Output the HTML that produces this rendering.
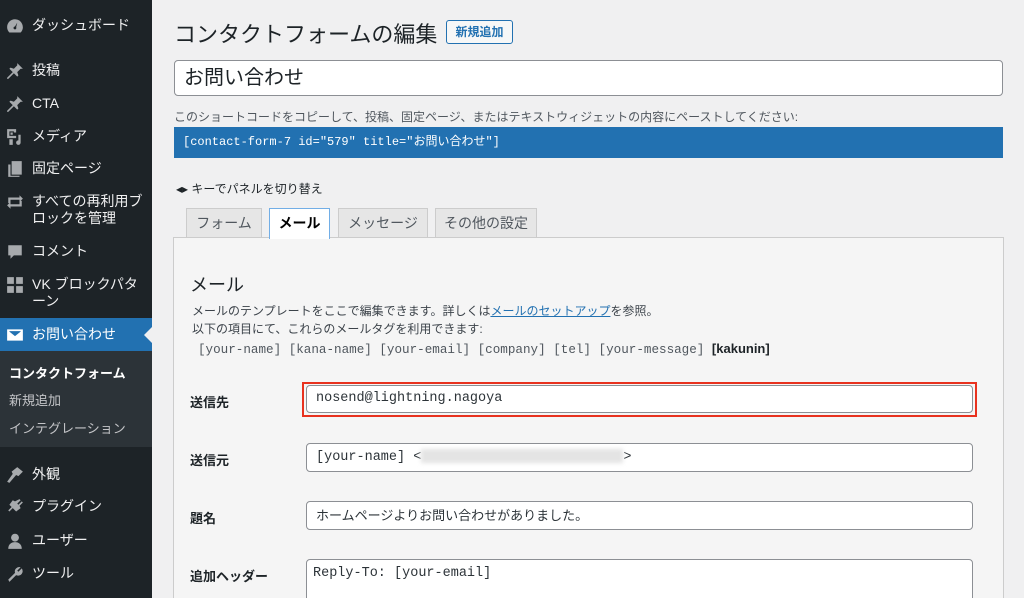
<!DOCTYPE html>
<html><head><meta charset="utf-8"><style>
*{box-sizing:border-box;margin:0;padding:0}
html{width:1024px;height:598px;overflow:hidden}
body{width:1024px;height:598px;overflow:hidden;background:#f0f0f1;font-family:"Liberation Sans","Noto Sans CJK JP",sans-serif;color:#1d2327;position:relative}
.sb{position:absolute;left:0;top:0;width:152px;height:598px;background:#1d2327}
.it{position:absolute;left:0;width:152px;color:#f0f0f1;font-size:14px;line-height:17px}
.it .ic{position:absolute;left:6px;width:18px;height:18px;fill:#a7aaad}
.it span{position:absolute;left:32px;white-space:nowrap}
.sub{position:absolute;left:0;top:351px;width:152px;height:96px;background:#2c3338}
.sub div{position:absolute;left:9px;font-size:13px;color:#c3c4c7;white-space:nowrap}
.mono{font-family:"Liberation Mono","Noto Sans CJK JP",monospace}
.abs{position:absolute}
.tab{position:absolute;top:208px;height:30px;background:#e6e6e6;border:1px solid #ccc;border-bottom:none;font-size:14px;color:#50575e;text-align:center;line-height:28px}
.lbl{position:absolute;left:190px;font-size:13px;font-weight:bold;color:#1d2327}
.inp{position:absolute;left:306px;width:667px;background:#fff;border:1px solid #8c8f94;border-radius:4px;font-size:14px;padding-left:9px;color:#2c3338}
</style></head><body>
<div class="sb">
 <div class="it" style="top:17px"><svg class="ic" viewBox="0 0 16 16"><path d="M8 2a7 7 0 0 0-7 7c0 2 .8 3.6 2 4.8h10A7 7 0 0 0 8 2zm0 9a1.3 1.3 0 1 1 0-2.6L10 5l-1 4a1.3 1.3 0 0 1-1 2z"/></svg><span>ダッシュボード</span></div>
 <div class="it" style="top:62px"><svg class="ic" viewBox="0 0 16 16"><path d="M10 1l5 5-2 0-3 3 1 3-1 1-3-3-5 5-1 0 0-1 5-5-3-3 1-1 3 1 3-3z"/></svg><span>投稿</span></div>
 <div class="it" style="top:95px"><svg class="ic" viewBox="0 0 16 16"><path d="M10 1l5 5-2 0-3 3 1 3-1 1-3-3-5 5-1 0 0-1 5-5-3-3 1-1 3 1 3-3z"/></svg><span>CTA</span></div>
 <div class="it" style="top:128px"><svg class="ic" viewBox="0 0 16 16"><path d="M1 1h8v3H7V3H3v4h6v2H1zM4 4h2v2H4zM3 10h3v5H3zM11 6h2v7a2 2 0 1 1-2-2z"/></svg><span>メディア</span></div>
 <div class="it" style="top:160px"><svg class="ic" viewBox="0 0 16 16"><path d="M5 1h9v12H5zM2 4h2v10h8v1H2z"/></svg><span>固定ページ</span></div>
 <div class="it" style="top:193px"><svg class="ic" viewBox="0 0 16 16"><path d="M2 4h10V2l3 3-3 3V6H4v3H2zM14 12H4v2l-3-3 3-3v2h8V7h2z"/></svg><span>すべての再利用ブ<br>ロックを管理</span></div>
 <div class="it" style="top:243px"><svg class="ic" viewBox="0 0 16 16"><path d="M2 2h12v9H7l-3 3v-3H2z"/></svg><span>コメント</span></div>
 <div class="it" style="top:276px"><svg class="ic" viewBox="0 0 16 16"><path d="M1 1h6v6H1zM9 1h6v6H9zM1 9h6v6H1zM9 9h6v6H9z"/></svg><span>VK ブロックパタ<br>ーン</span></div>
 <div class="abs" style="top:318px;left:0;width:152px;height:33px;background:#2271b1"></div>
 <div class="abs" style="top:327px;left:144px;width:0;height:0;border-top:8px solid transparent;border-bottom:8px solid transparent;border-right:8px solid #f0f0f1"></div>
 <div class="it" style="top:326px;color:#fff"><svg class="ic" viewBox="0 0 16 16" style="fill:#fff"><path d="M1 3h14v10H1zM3 5l5 4 5-4v-0.5H3z" fill-rule="evenodd"/></svg><span>お問い合わせ</span></div>
 <div class="sub">
  <div style="top:12px;color:#fff;font-weight:bold">コンタクトフォーム</div>
  <div style="top:39px">新規追加</div>
  <div style="top:67px">インテグレーション</div>
 </div>
 <div class="it" style="top:466px"><svg class="ic" viewBox="0 0 16 16"><path d="M10 1l5 4-4 4-2-1-6 7-2-1 5-7-1-2z"/></svg><span>外観</span></div>
 <div class="it" style="top:498px"><svg class="ic" viewBox="0 0 16 16"><path d="M12 1l1 1-3 3 1 1 3-3 1 1-3 3 1 2-4 3-3-3-3 3-1-1 3-3-2-2 3-4 2 1z"/></svg><span>プラグイン</span></div>
 <div class="it" style="top:532px"><svg class="ic" viewBox="0 0 16 16"><circle cx="8" cy="5" r="3.5"/><path d="M2 15c0-4 2.5-6 6-6s6 2 6 6z"/></svg><span>ユーザー</span></div>
 <div class="it" style="top:565px"><svg class="ic" viewBox="0 0 16 16"><path d="M14 3l-3 3-1-1 3-3a4 4 0 0 0-5 5L2 13l1 2 6-6a4 4 0 0 0 5-6z"/></svg><span>ツール</span></div>
</div>

<div class="abs" style="left:174px;top:17px;font-size:22px;color:#1d2327;white-space:nowrap">コンタクトフォームの編集</div>
<div class="abs" style="left:446px;top:20px;width:67px;height:24px;border:1px solid #2271b1;border-radius:3px;background:#f6f7f7;color:#2271b1;font-size:12px;font-weight:bold;text-align:center;line-height:22px">新規追加</div>
<div class="abs" style="left:174px;top:60px;width:829px;height:36px;background:#fff;border:1px solid #8c8f94;border-radius:4px;font-size:20px;padding-left:9px;line-height:34px">お問い合わせ</div>
<div class="abs" style="left:174px;top:108px;font-size:12px;color:#50575e;white-space:nowrap">このショートコードをコピーして、投稿、固定ページ、またはテキストウィジェットの内容にペーストしてください:</div>
<div class="abs mono" style="left:174px;top:127px;width:829px;height:31px;background:#2271b1;color:#fff;font-size:12px;padding-left:9px;line-height:31px">[contact-form-7 id="579" title="お問い合わせ"]</div>
<div class="abs" style="left:176px;top:180px;font-size:12px;color:#1d2327;white-space:nowrap">◂▸ キーでパネルを切り替え</div>

<div class="tab" style="left:186px;width:76px">フォーム</div>
<div class="tab" style="left:338px;width:90px">メッセージ</div>
<div class="tab" style="left:435px;width:102px">その他の設定</div>
<div class="abs" style="left:173px;top:237px;width:831px;height:370px;background:#f5f5f5;border:1px solid #ccc"></div>
<div class="tab" style="left:269px;width:61px;background:#fff;border:1px solid #72aee6;border-bottom:none;color:#000;font-weight:bold;height:31px">メール</div>

<div class="abs" style="left:190px;top:271px;font-size:18px;color:#1d2327">メール</div>
<div class="abs" style="left:192px;top:302px;font-size:12px;color:#3c434a;line-height:18px;white-space:nowrap">メールのテンプレートをここで編集できます。詳しくは<span style="color:#2271b1;text-decoration:underline">メールのセットアップ</span>を参照。<br>以下の項目にて、これらのメールタグを利用できます:</div>
<div class="abs mono" style="left:198px;top:341px;font-size:12.6px;color:#50575e;white-space:nowrap">[your-name] [kana-name] [your-email] [company] [tel] [your-message] <b style="color:#1d2327;font-family:'Liberation Sans',sans-serif;font-size:13px">[kakunin]</b></div>

<div class="lbl" style="top:392px">送信先</div>
<div class="abs" style="left:302px;top:382px;width:675px;height:35px;border:2px solid #e8321f"></div>
<div class="inp mono" style="top:385px;height:28px;line-height:26px;font-size:13.5px">nosend@lightning.nagoya</div>
<div class="lbl" style="top:450px">送信元</div>
<div class="inp mono" style="top:443px;height:29px;line-height:27px;font-size:13.5px">[your-name] &lt;<span style="display:inline-block;width:202px;height:14px;background:#e4e4e4;vertical-align:middle;filter:blur(2px)"></span>&gt;</div>
<div class="lbl" style="top:508px">題名</div>
<div class="inp" style="top:501px;height:29px;line-height:27px;font-size:13px">ホームページよりお問い合わせがありました。</div>
<div class="lbl" style="top:566px">追加ヘッダー</div>
<div class="inp mono" style="top:559px;height:50px;line-height:28px;padding-left:6px;font-size:13.5px">Reply-To: [your-email]</div>
</body></html>
